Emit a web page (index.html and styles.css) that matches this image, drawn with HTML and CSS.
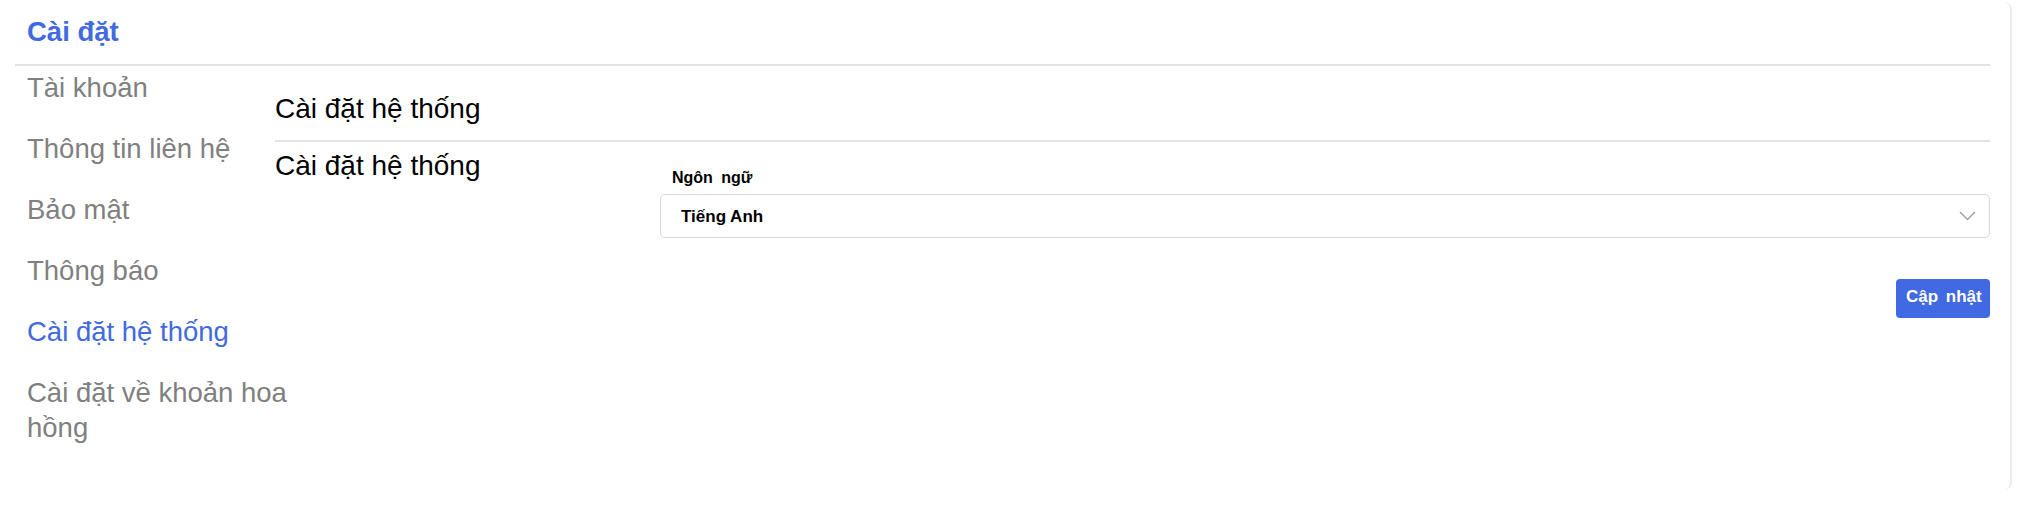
FILE: index.html
```html
<!DOCTYPE html>
<html lang="vi">
<head>
<meta charset="utf-8">
<title>Cài đặt</title>
<link rel="stylesheet" href="styles.css">
</head>
<body>
<div class="card">
  <header class="page-head">
    <h1 class="page-title">Cài đặt</h1>
  </header>
  <div class="layout">
    <nav class="side">
      <ul class="side-list">
        <li class="side-item">Tài khoản</li>
        <li class="side-item">Thông tin liên hệ</li>
        <li class="side-item">Bảo mật</li>
        <li class="side-item">Thông báo</li>
        <li class="side-item active">Cài đặt hệ thống</li>
        <li class="side-item">Cài đặt về khoản hoa hồng</li>
      </ul>
    </nav>
    <main class="content">
      <h2 class="content-title">Cài đặt hệ thống</h2>
      <section class="sys-row">
        <h3 class="sys-title">Cài đặt hệ thống</h3>
        <div class="form">
          <label class="field-label">Ngôn ngữ</label>
          <div class="select">
            <span class="select-value">Tiếng Anh</span>
            <svg class="chevron" width="17" height="10" viewBox="0 0 17 10"><polyline points="1,1 8.5,8.5 16,1" fill="none" stroke="#a3a3a3" stroke-width="1.5"/></svg>
          </div>
          <div class="actions">
            <button class="btn-primary" type="button">Cập nhật</button>
          </div>
        </div>
      </section>
    </main>
  </div>
</div>
</body>
</html>
```

FILE: styles.css
```css
* { box-sizing: border-box; }
html, body {
  margin: 0;
  padding: 0;
  background: #ffffff;
  font-family: "Liberation Sans", Arial, sans-serif;
}
.card {
  margin: 2px 14px 0 0;
  height: 488px;
  padding: 0 20px 0 15px;
  border-right: 2px solid #ebebeb;
  border-radius: 0 8px 8px 0;
}
.page-head {
  padding: 13px 0 15px 12px;
  border-bottom: 2px solid #e3e3e3;
}
.page-title {
  margin: 0;
  font-size: 27.5px;
  line-height: 34px;
  font-weight: 700;
  color: #4169e1;
}
.layout {
  display: grid;
  grid-template-columns: 260px 1fr;
}
.side {
  padding-top: 4px;
}
.side-list {
  list-style: none;
  margin: 0;
  padding: 0 0 0 12px;
  width: 302px;
}
.side-item {
  font-size: 27.5px;
  line-height: 35px;
  color: #808080;
  margin-bottom: 26px;
}
.side-item.active {
  color: #4169e1;
}
.content {
  padding-top: 25px;
}
.content-title {
  margin: 0;
  font-size: 28px;
  line-height: 35px;
  font-weight: 400;
  color: #000;
  padding-bottom: 14px;
  border-bottom: 2px solid #e3e3e3;
}
.sys-row {
  display: grid;
  grid-template-columns: 385px 1fr;
}
.sys-title {
  margin: 0;
  padding-top: 8px;
  font-size: 28px;
  line-height: 31px;
  font-weight: 400;
  color: #000;
}
.form {
  padding-top: 26px;
  display: flex;
  flex-direction: column;
}
.field-label {
  display: block;
  padding-left: 12px;
  margin-bottom: 6px;
  font-size: 16px;
  line-height: 20px;
  font-weight: 700;
  word-spacing: 4px;
  color: #000;
}
.select {
  height: 44px;
  border: 1.5px solid #d9d9d9;
  border-radius: 5px;
  padding: 2px 13px 0 20px;
  display: flex;
  align-items: center;
  justify-content: space-between;
}
.select-value {
  font-size: 17px;
  font-weight: 700;
  color: #000;
}
.chevron { display: block; margin-top: -2px; }
.actions {
  margin-top: 41px;
  display: flex;
  justify-content: flex-end;
}
.btn-primary {
  height: 39px;
  width: 94px;
  padding: 0 4px 3px 10px;
  border: none;
  border-radius: 4px;
  background: #4169e1;
  color: #fff;
  font-family: "Liberation Sans", Arial, sans-serif;
  font-size: 17px;
  font-weight: 700;
  word-spacing: 3px;
  text-align: left;
}
```
